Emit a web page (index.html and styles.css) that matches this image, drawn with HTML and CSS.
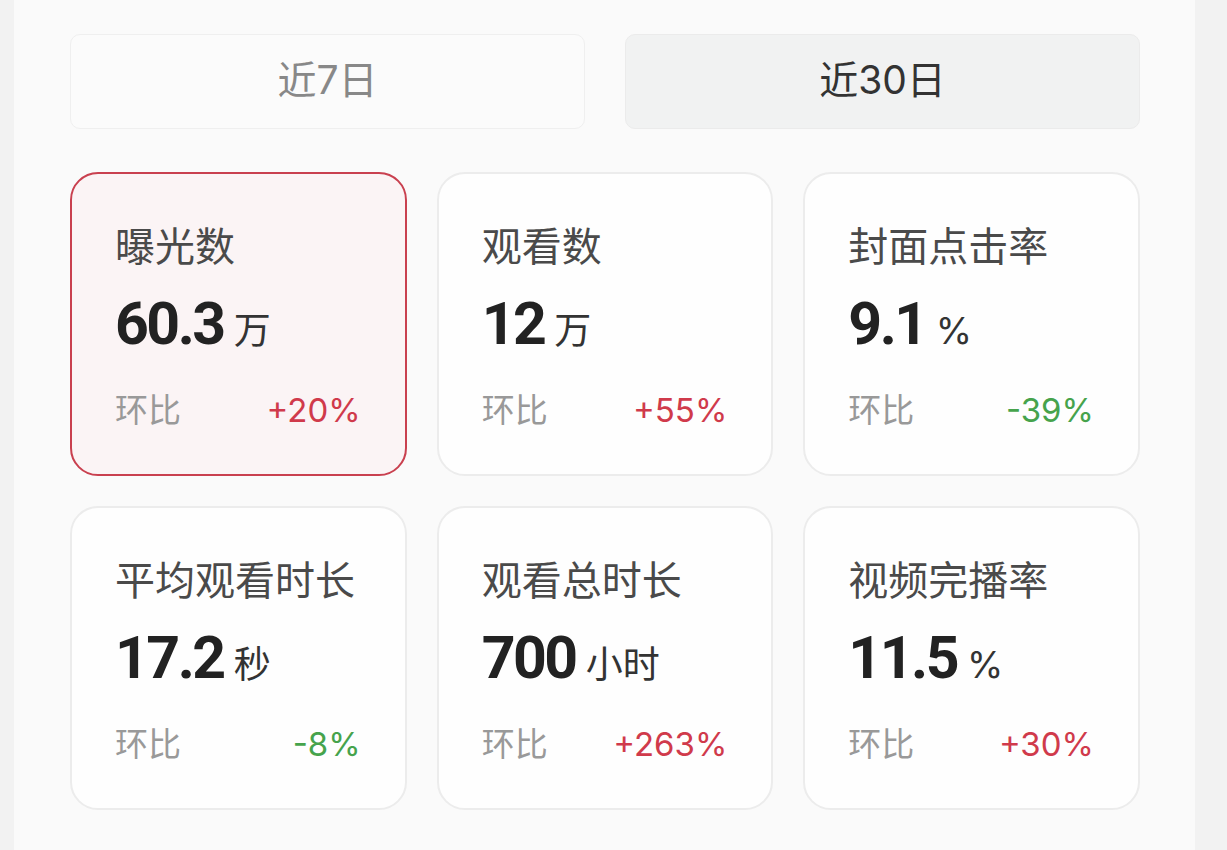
FILE: index.html
```html
<!DOCTYPE html>
<html lang="zh-CN">
  <head>
    <meta charset="UTF-8" />
    <meta name="viewport" content="width=device-width, initial-scale=1.0" />
    <title>数据概览</title>
    <link rel="stylesheet" href="styles.css">
  </head>
  <body>
    <div class="panel">
      <div class="tabs">
        <div class="tab">近7日</div>
        <div class="tab active">近30日</div>
      </div>

      <div class="stats">
        <div class="stat-card selected">
          <div class="stat-title">曝光数</div>
          <div class="stat-value">60.3<span class="unit">万</span></div>
          <div class="stat-compare">
            <span>环比</span>
            <span class="up">+20%</span>
          </div>
        </div>
        <div class="stat-card">
          <div class="stat-title">观看数</div>
          <div class="stat-value">12<span class="unit">万</span></div>
          <div class="stat-compare">
            <span>环比</span>
            <span class="up">+55%</span>
          </div>
        </div>
        <div class="stat-card">
          <div class="stat-title">封面点击率</div>
          <div class="stat-value">9.1<span class="unit">%</span></div>
          <div class="stat-compare">
            <span>环比</span>
            <span class="down">-39%</span>
          </div>
        </div>
        <div class="stat-card">
          <div class="stat-title">平均观看时长</div>
          <div class="stat-value">17.2<span class="unit">秒</span></div>
          <div class="stat-compare">
            <span>环比</span>
            <span class="down">-8%</span>
          </div>
        </div>
        <div class="stat-card">
          <div class="stat-title">观看总时长</div>
          <div class="stat-value">700<span class="unit">小时</span></div>
          <div class="stat-compare">
            <span>环比</span>
            <span class="up">+263%</span>
          </div>
        </div>
        <div class="stat-card">
          <div class="stat-title">视频完播率</div>
          <div class="stat-value">11.5<span class="unit">%</span></div>
          <div class="stat-compare">
            <span>环比</span>
            <span class="up">+30%</span>
          </div>
        </div>
      </div>
    </div>
  </body>
</html>
```

FILE: styles.css
```css
* {
  margin: 0;
  padding: 0;
  box-sizing: border-box;
  font-family: Inter, "Noto Sans CJK SC", sans-serif;
}

body {
  background-color: #f2f2f2;
}

.panel {
  width: 1181px;
  min-height: 850px;
  margin-left: 14px;
  padding: 34px 55px 40px 56px;
  background-color: #fafafa;
}

/* period switch */
.tabs {
  display: flex;
  gap: 40px;
  margin-bottom: 43px;
}

.tab {
  flex: 1;
  height: 95px;
  padding-bottom: 10px;
  display: flex;
  align-items: center;
  justify-content: center;
  border: 1px solid #efefef;
  border-radius: 10px;
  background-color: #fbfbfb;
  color: #888;
  font-size: 39px;
}

.tab.active {
  background-color: #f1f2f2;
  border-color: #ebebeb;
  color: #333;
}

/* metric cards */
.stats {
  display: grid;
  grid-template-columns: repeat(3, 1fr);
  gap: 30px;
}

.stat-card {
  height: 304px;
  padding: 47px 44px 0 43px;
  border: 2px solid #ececec;
  border-radius: 28px;
  background-color: #fefefe;
}

.stat-card.selected {
  border-color: #c9404f;
  background-color: #fbf4f5;
}

.stat-title {
  font-size: 40px;
  line-height: 52px;
  color: #4a4a4a;
}

.stat-value {
  margin-top: 16px;
  font-family: Roboto, "Noto Sans CJK SC", sans-serif;
  font-size: 59px;
  line-height: 70px;
  font-weight: 700;
  letter-spacing: -2.5px;
  color: #222;
}

.unit {
  margin-left: 10px;
  font-family: Inter, "Noto Sans CJK SC", sans-serif;
  font-size: 37px;
  font-weight: 400;
  letter-spacing: 0;
  color: #333;
}

.stat-compare {
  margin-top: 23px;
  display: flex;
  justify-content: space-between;
  align-items: center;
  font-size: 33px;
  line-height: 43px;
  color: #999;
}

.up {
  color: #d03a4b;
}

.down {
  color: #46a34c;
}
```
